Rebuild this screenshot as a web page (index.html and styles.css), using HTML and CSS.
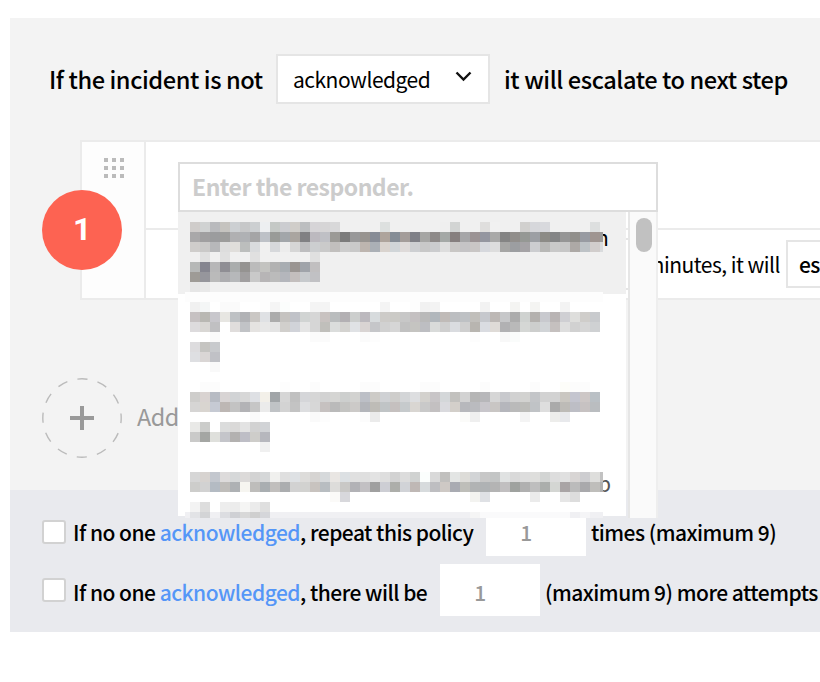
FILE: index.html
```
<!DOCTYPE html>
<html lang="en">
<head>
<meta charset="utf-8">
<title>Escalation policy</title>
<link rel="stylesheet" href="styles.css">
</head>
<body>
<main class="policy">
  <section class="steps">
    <header class="condition">
      <span class="condition-lead">If the incident is not</span>
      <div class="select"><span>acknowledged</span>
        <svg class="chevron" width="18" height="12" viewBox="0 0 18 12"><path d="M1.5 1.5 8.5 8.5 15.5 1.5" fill="none" stroke="#111" stroke-width="2.4"/></svg>
      </div>
      <span class="condition-tail">it will escalate to next step</span>
    </header>
    <div class="card">
      <div class="card-handle">
        <svg width="20" height="20" viewBox="0 0 20 20" fill="#bbb"><path d="M0 0h4v4H0zM8 0h4v4H8zM16 0h4v4h-4zM0 8h4v4H0zM8 8h4v4H8zM16 8h4v4h-4zM0 16h4v4H0zM8 16h4v4H8zM16 16h4v4h-4z"/></svg>
      </div>
      <div class="card-body">
        <div class="responders"></div>
        <div class="timing"><span class="minutes-box"></span><span class="timing-text">minutes, it will</span><span class="action-box">es</span></div>
      </div>
      <div class="badge">1</div>
      <div class="dropdown">
        <div class="search">Enter the responder.</div>
        <div class="list">
          <div class="options">
            <div class="option-active"></div>
            <span class="tail tail-n">n</span>
            <span class="tail tail-b">b</span>
            <svg id="mosaic" class="mosaic" width="418" height="296" viewBox="0 0 418 296" shape-rendering="crispEdges"></svg>
          </div>
          <div class="scroll"><div class="thumb"></div></div>
        </div>
      </div>
    </div>
    <div class="add">
      <svg width="80" height="80" viewBox="0 0 80 80" fill="none"><circle cx="40" cy="40" r="39.2" stroke="#bbb" stroke-width="1.4" stroke-dasharray="10.2 10.33" stroke-dashoffset="5"/><path d="M28 40h24M40 28v24" stroke="#999" stroke-width="4"/></svg>
      <span class="add-label">Add</span>
    </div>
  </section>
  <footer class="repeat">
    <div class="rule rule-first"><i class="check"></i><span class="rule-text">If no one <a>acknowledged</a>, repeat this policy</span><span class="count">1</span><span class="rule-end">times (maximum 9)</span></div>
    <div class="rule rule-second"><i class="check"></i><span class="rule-text">If no one <a>acknowledged</a>, there will be</span><span class="count">1</span><span class="rule-end">(maximum 9) more attempts</span></div>
  </footer>
</main>
<script src="mosaic.js"></script>
</body>
</html>
```
FILE: styles.css
```
* { box-sizing: border-box; }
body { margin: 0; height: 682px; overflow: hidden; background: #fff; color: #000; font-family: "Noto Sans CJK SC", "Noto Sans", sans-serif; font-size: 21px; letter-spacing: -0.52px; line-height: 30px; white-space: nowrap; }
.policy { margin: 18px 0 0 10px; width: 810px; }
.steps { height: 472px; background: #f3f3f3; padding-top: 36px; }
.condition { display: flex; align-items: center; height: 50px; padding-left: 39px; font-size: 23.6px; letter-spacing: -0.42px; font-weight: 500; }
.condition-lead { width: 227px; }
.select { display: flex; align-items: center; justify-content: space-between; width: 214px; height: 50px; padding: 0 15px; border: 2px solid #e5e5e5; background: #fff; font-size: 21px; letter-spacing: -0.5px; font-weight: 400; }
.chevron { margin-top: -4px; }
.condition-tail { margin-left: 14px; }
.card { position: relative; display: flex; margin: 36px 0 0 70px; width: 740px; height: 160px; border: 2px solid #ebebeb; border-right: 0; background: #fff; }
.card-handle { width: 64px; padding: 16px 0 0 22px; border-right: 2px solid #ebebeb; background: #fdfdfd; line-height: 0; }
.card-body { flex: 1; min-width: 0; overflow: hidden; }
.responders { height: 88px; border-bottom: 2px solid #ebebeb; }
.timing { display: flex; align-items: center; height: 68px; padding-left: 374px; }
.timing > * { flex: none; }
.minutes-box { width: 110px; height: 52px; border: 2px solid #e5e5e5; }
.timing-text { width: 134px; margin-left: 16px; display: flex; justify-content: flex-end; }
.action-box { width: 160px; height: 48px; margin-left: 6px; padding: 7px 0 0 11px; border: 2px solid #e5e5e5; font-weight: 500; }
.badge { position: absolute; left: -40px; top: 48px; width: 80px; height: 80px; border-radius: 50%; background: #fd6352; color: #fff; font: bold 32px/78px Roboto, sans-serif; text-align: center; }
.dropdown { position: absolute; left: 96px; top: 20px; width: 480px; height: 356px; }
.search { height: 50px; padding: 7px 12px; border: 2px solid #ddd; background: #fff; color: #ccc; font-size: 23px; font-weight: 700; }
.list { display: flex; justify-content: space-between; height: 306px; }
.options { position: relative; width: 448px; height: 304px; background: #fff; }
.option-active { height: 82px; background: #f0f0f0; }
.mosaic { position: absolute; left: 7px; top: 10px; }
.tail { position: absolute; }
.tail-n { left: 418px; top: 10px; }
.tail-b { left: 420px; top: 256px; color: #555; }
.scroll { width: 30px; height: 306px; padding: 6px 0 0 6px; border-left: 2px solid #e6e6e6; border-right: 2px solid #eee; background: #fafafa; }
.thumb { width: 16px; height: 34px; border-radius: 8px; background: #c1c1c1; }
.add { display: flex; align-items: center; gap: 15px; margin: 78px 0 0 32px; height: 80px; color: #999; font-size: 23.4px; }
.add-label { margin-top: -4px; }
.repeat { height: 142px; padding-top: 14px; background: #e9eaee; font-weight: 500; }
.rule { display: flex; align-items: center; height: 52px; padding-left: 32px; }
.rule > * { flex: none; }
.rule-second { margin-top: 8px; }
.check { width: 24px; height: 24px; border: 2px solid #d2d2d2; border-radius: 3px; background: #fff; }
.rule-first .check { margin-top: 4px; }
.rule-text, .rule-end { padding-top: 3px; }
.rule-text { margin-left: 7px; }
.rule-first .rule-text { width: 413px; }
.rule-second .rule-text { width: 367px; }
.rule a { color: #5596f7; }
.count { width: 100px; height: 52px; padding: 13px 20px 0 0; background: #fff; color: #999; text-align: center; }
.rule-end { margin-left: 5px; }
```
FILE: mosaic.js
```
// Each row is 10px tall: six digits give a colour, two digits a grey, "." a gap, ".n" n gaps.
const rows = [
"cfccca d0d2d2 b9babd c5c3bf cccfd2 c6c7c8 cccfd1 edeff1 c4c8c5 cbccd0 d0cdc9 bcbec0 d6d4d7 d6d5d6 d8d8d9 .4 dde0df .5 ef d2d4d3 .2 dfdedd f1 .2 d1d0ce d6d7db d8d9dd .4 dddfdf",
"a9a8a9 a09fa0 9b9c9e 9c9c9b b0b0b2 afb1b4 a5a5a6 bdc1c7 999b98 a2a6aa aaa5a0 808083 bcb9bf bfc0c5 9b9a96 7c7c7c 989899 989490 878c96 aea49c 858d96 a49d9a 7f8087 a6a6a4 8e8a89 a4a8a6 867f7e a6a6a8 9b9394 9496a0 a9a9a8 84 918e8b 959894 9c9fa4 8c8b86 848586 96 918f8b 989ba2 9f9591 9a",
"cfcdcb cac9c8 b7b8ba dd e0dedb bcbebd d9dbdd . d6d8db ec d6 bdbdbf ccced0 ca c1bfbd cd c9 bdb5af abb0b6 d9d3ce d0d5d8 dedad9 cdcfd2 c8 cbccce dd c9c7c5 c5c4c6 c9c6c5 d6d8dd dd a6a6a5 9c9ea1 a5a3a6 cccdd0 b8b8b6 c9 c7 ada9a6 bdc2c6 d1cdcc d9dbdd",
". e0 . e0 .2 e0 .5 e0",
"b6b8b7 85858f b7b7b8 8f8e94 aaadad 959391 bb c3c3c0 b2 a8adb2 9a9592 a0a4aa c1bfc0",
"9e9b96 96969c ba aeaeb1 b6b8ba a19fa0 c9 b7b5b6 bb b4b6bc c3bebd c7cacd c1c1c4",
"e6 e9",
"",
"f0 f4f6f6 . fa fa .2 fd f5 fbfdfc .2 f4 f4 .5 f4 .2 fd f1 f3 .4 f2 .2 f4f4f2 . f4f4f2 .2 f3",
"c6c1c2 b9b8b3 c8c7cc e7e6e2 bec1c4 b1b2b5 cac7c4 dfe1e4 ac c5c3c0 c0c2c8 d1d4d3 d6 c8c2c0 babdbe b3b0b3 cccecd bcb9be d7dbdd cdcbc8 cbcac6 c7 c4c0c1 b9 b1b7bc c0bbb8 bcbec1 bec1c4 c1bfbb c6c8cd bdb8b5 c6c7c9 ac cfd2d0 b4b1ae c8c9ce b9b4b4 cfcfd3 dededc cfcdca c8cacd",
"dddbdd d9d7d4 c0c0c2 . e0dddc c1c3c6 e5e3e1 e7 e4 d1cfcc d1d3d9 e5 d6 c0bfbb dbdddc d4d3d0 e0e2e5 d9d4d3 c5c6c9 d1 d6 c1 c5c4c1 bdbec2 d9dbda cf dadce0 cf b8b5b0 dadce1 dfdbd7 b1b1b3 b9 d5d7d5 cdcecd d1d4d7 c5c0bf de d1 d6 cfd1d3",
".2 fa .9 fb fb .3 fb fd .9 fd .2 f8 fafcfb",
"dddcde c5c4c1 c8cacd",
"dedfe2 dad6d5 c0c1c6",
".2 f9",
"",
". fc fc .6 fd .2 fc .4 fc fc .4 fc fc .4 fc .4 fc .2 fdfdf9 fc fc",
"cecdcb d9d3d1 b7bbc3 d8d4d4 d1d3d5 d7 dee0e4 f3f0e9 a1a5a8 d6 c0 d5d6d9 d6 d2 d5d5d3 cdcfce d2d2d0 bcbfc6 cdcbc7 cfd1d4 cecdcb d3d5d7 dddee0 d3d1cd c8c5c7 d4d7d9 c2c1be d2 b5 b7b7ba d6 c8c9cd d1 d2d2d0 c3c5c8 d2 d2 cac7c1 c4c5cf cdc7c6 bac0c5",
"d6d5d4 d9d5d0 c6cad3 bdb7b4 c3 b3b3b6 c6 eb c0c3c6 d3 c3 dddee0 d7 c6c1c0 ba c4c4c2 cccac8 b3b5ba bebcb7 c0c4c6 c5c0bf c6cacc d9d6d2 c9 c3c0c1 dadade d3cfca b7b8bc babbbf c8c6cb c9c6c4 b5b6bc ba bcbcb9 c0c3c6 de aa bdbbb7 bdbec5 c7c2c2 babdc0",
".6 fa .5 fa fd .3 fc eb .8 fbfbf9 ef .4 f4 .2 ededeb e8e9ec",
"e9e9e7 cbccca . dbdcdc dad9d8 e3 d2 d1d3d6",
"cacac9 a4a6a3 dfe0dc c4c5ca b3b1b0 bebec6 cecdca b6b7bd",
".7 f0",
"", "",
"d6 d7d3d0 c3c7ce dddbdb d6d8d9 dcdad9 d3 d5d7d8 f0f0ee df dee1e4 dddcda d6d4d2 d6d9db e9e6e3 dce0e3 e0 df e3 de d2 dc d0d2d1 fbfefd d9 c1c0be e3e5e4 dddcd8 d2d4d6 c7 c3c5c5 e0e2e2 d9 dd dededc d2d4d3 dd e0 d8d5d4 cdcdd0 dededc c2",
"cdcdcb d2 b4bbc3 bfbdba aeb1b4 f6f5f0 bebdbb a9aeb1 c1bfbd abadaf d2 d2d2d0 c8c3bf b8bdc1 dddcda c9c8c6 b2b2b6 c2c0c3 a0 cdced4 adaeaa d1d3d7 bfb8b5 d7dbdd bebec1 cec9c5 a9abb2 bebeb9 b1b3b4 afb2b4 b4 c1bfc0 9fa29f b0 be abaeac d4d6d3 a9a4a5 bb a9a9ac bfbebb b0",
".14 fbfaf8 d8d8dc .12 f3f3f0 dfe1e5 .4 eb .2 e6 dd",
"f3 dd . ed ec f5f5f4 eb df",
"e2e3e6 d3d4d6 . dcdde1 cfd0d4 d8 cf d5d6da .20 f5 .10 f5f5f7"
];
const mosaic = document.getElementById("mosaic");
function block(x, y, w, h, fill) {
  const r = document.createElementNS("http://www.w3.org/2000/svg", "rect");
  for (const [k, v] of Object.entries({ x, y, width: w, height: h, fill })) r.setAttribute(k, v);
  mosaic.appendChild(r);
}
block(0, 70, 418, 10, "#fdfdfd");
block(0, 290, 418, 6, "#f0f0f3");
block(295, 290, 90, 6, "#fafafb");
rows.forEach((row, j) => {
  let col = 0;
  for (const t of row.split(" ")) {
    if (t[0] === ".") { col += +t.slice(1) || 1; continue; }
    if (t) block(5 + col * 10, j * 10, 10, 10, "#" + (t.length === 2 ? t.repeat(3) : t));
    col++;
  }
});
```
